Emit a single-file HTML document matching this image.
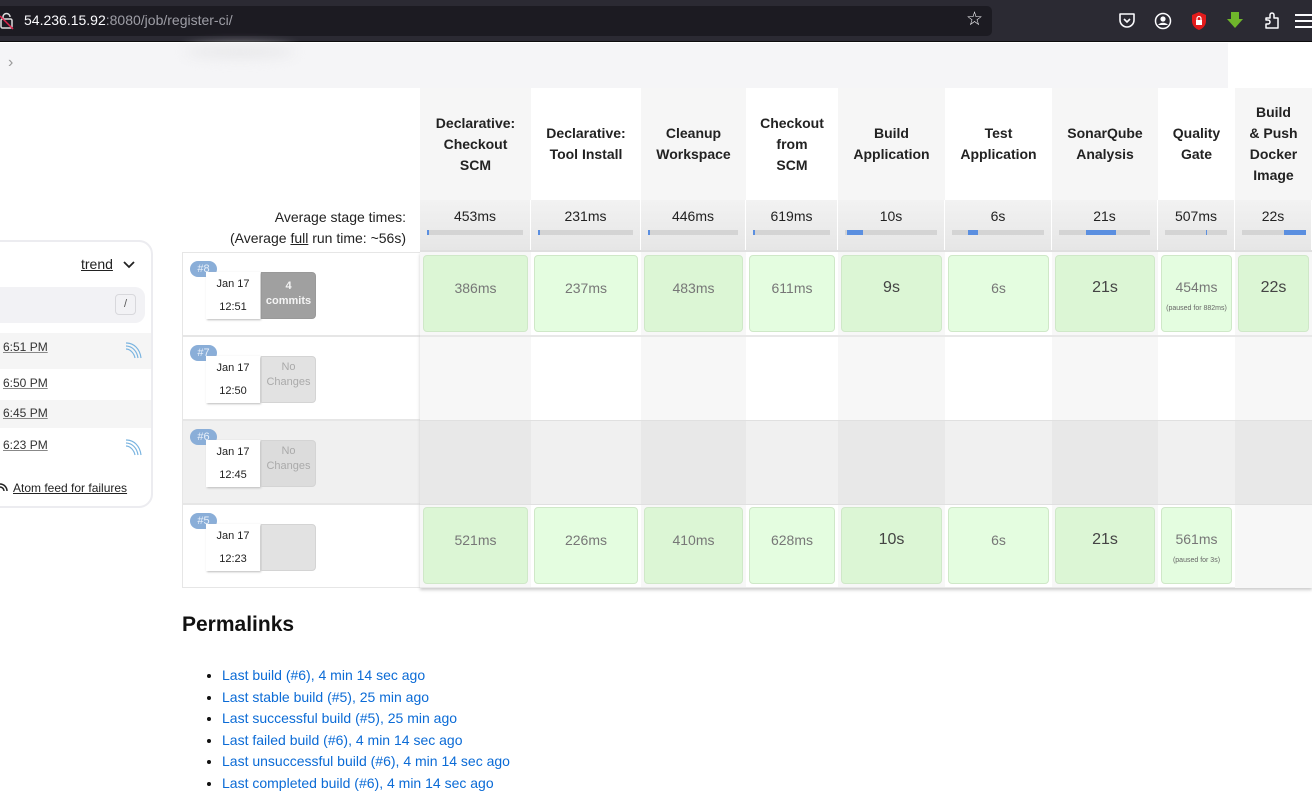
<!DOCTYPE html>
<html><head><meta charset="utf-8">
<style>
*{box-sizing:border-box;margin:0;padding:0}
body{width:1312px;height:805px;overflow:hidden;background:#fff;font-family:"Liberation Sans","DejaVu Sans",sans-serif;position:relative;color:#222}
.a{position:absolute}
.hd{position:absolute;top:88px;height:112px;display:flex;align-items:center;justify-content:center;text-align:center;font-weight:bold;font-size:14px;line-height:21px;color:#222}
.av{position:absolute;top:200px;height:50px;text-align:center;font-size:14px;padding-top:8px;background:linear-gradient(#f2f2f2,#e6e6e6);border-right:1px solid #fff}
.bar{position:absolute;top:30px;height:5px;left:7px;right:7px;background:#d4d4d4}
.bar i{position:absolute;top:0;height:5px;background:#5b8fe0}
.cl{position:absolute;height:84px;border-bottom:1px solid #e8e8e8}
.bx{position:absolute;top:3px;bottom:3px;left:3px;right:3px;border:1px solid #cfe8c8;border-radius:4px;display:flex;flex-direction:column;align-items:center;justify-content:center;font-size:14px;color:#777;padding-bottom:12px}
.g1{background:#dcf6d5}.g2{background:#e4fde0}
.dk{color:#444;font-size:16px}
.pz{font-size:7px;color:#666;margin-top:10px}
.bl{position:absolute;left:182px;width:238px;height:84px;border:1px solid #e6e6e6;border-right:none}
.num{position:absolute;left:7px;top:8px;width:27px;height:16px;border-radius:8px;background:#8aaed8;color:#e8f0fa;font-size:11px;text-align:center;line-height:16px}
.dt{position:absolute;left:23px;top:19px;width:54px;height:47px;background:#fff;box-shadow:1px 1px 2px #bbb;font-size:11px;text-align:center;line-height:23px;color:#222;padding-top:1px}
.cm{position:absolute;left:78px;top:19px;width:55px;height:47px;border-radius:0 4px 4px 0;background:#e2e2e2;border:1px solid #d4d4d4;color:#aaa;font-size:11px;text-align:center;line-height:15px;padding-top:3px}
.lk{color:#0b6bd6;font-size:14px;line-height:21.5px}
.lr{position:absolute;left:0;width:152px;font-size:12px;color:#333}
.lr span{text-decoration:underline;text-decoration-color:#888;margin-left:3px}
li::marker{color:#111}
</style></head><body>
<div class="a" style="left:0;top:0;width:1312px;height:42px;background:#2b2a33;border-bottom:1px solid #0c0c0d"></div>
<div class="a" style="left:0;top:6px;width:992px;height:30px;background:#1c1b22;border-radius:0 5px 5px 0"></div>
<svg class="a" style="left:0;top:12px" width="16" height="18"><rect x="1" y="7" width="11" height="9" rx="1.5" fill="none" stroke="#ddd" stroke-width="1.5"/><path d="M3 7V5a3.5 3.5 0 0 1 7 0" fill="none" stroke="#ddd" stroke-width="1.5"/><path d="M0 4L13 17" stroke="#e22850" stroke-width="1.5"/></svg>
<div class="a" style="left:24px;top:12px;font-size:14px;color:#fbfbfe">54.236.15.92<span style="color:#9e9ea6">:8080/job/register-ci/</span></div>
<div class="a" style="left:966px;top:8px;font-size:19px;color:#fbfbfe">☆</div>
<svg class="a" style="left:1118px;top:12px" width="18" height="17"><path d="M2 2h14v6a7 7 0 0 1-14 0z" fill="none" stroke="#fbfbfe" stroke-width="1.6" stroke-linejoin="round"/><path d="M6 7l3 3 3-3" fill="none" stroke="#fbfbfe" stroke-width="1.6"/></svg>
<svg class="a" style="left:1154px;top:12px" width="18" height="18"><circle cx="9" cy="9" r="7.5" fill="none" stroke="#fbfbfe" stroke-width="1.5"/><circle cx="9" cy="7" r="2.6" fill="#fbfbfe"/><path d="M4 13c2-3 8-3 10 0" fill="#fbfbfe"/></svg>
<svg class="a" style="left:1190px;top:11px" width="18" height="20"><path d="M9 1l7 3v6c0 5-4 8-7 9-3-1-7-4-7-9V4z" fill="#e21b1b"/><rect x="6" y="9" width="6" height="5" fill="#fff"/><path d="M7 9V7.5a2 2 0 0 1 4 0V9" fill="none" stroke="#fff" stroke-width="1.2"/></svg>
<svg class="a" style="left:1226px;top:11px" width="18" height="18"><path d="M5 1h8v7h4l-8 9-8-9h4z" fill="#6fb52b"/></svg>
<svg class="a" style="left:1263px;top:11px" width="18" height="20"><path d="M3 7h4V4a2 2 0 0 1 4 0v3h4v10H3v-4h2a2 2 0 0 0 0-4H3z" fill="none" stroke="#fbfbfe" stroke-width="1.5" stroke-linejoin="round"/></svg>
<div class="a" style="left:1295px;top:14px;width:17px;height:2px;background:#fbfbfe;box-shadow:0 6px 0 #fbfbfe,0 12px 0 #fbfbfe"></div>
<div class="a" style="left:0;top:43px;width:1228px;height:45px;background:#f5f5f7"></div>
<div class="a" style="left:8px;top:54px;font-size:16px;color:#999">›</div>
<div class="a" style="left:185px;top:46px;width:110px;height:12px;border-radius:50%;background:#e8e8ea;filter:blur(6px)"></div>

<div class="a" style="left:-20px;top:240px;width:173px;height:268px;border:2px solid #ececf0;border-radius:14px;background:#fff;overflow:hidden">
 <div class="a" style="left:99px;top:14px;font-size:14px;color:#222;text-decoration:underline">trend</div>
 <svg class="a" style="left:141px;top:19px" width="12" height="8"><path d="M1 1l5 5 5-5" fill="none" stroke="#222" stroke-width="1.8"/></svg>
 <div class="a" style="left:0;top:45px;width:163px;height:36px;background:#f2f2f5;border-radius:10px"></div>
 <div class="a" style="left:133px;top:52px;width:21px;height:21px;border:1px solid #d8d8dc;border-radius:4px;font-size:11px;color:#555;text-align:center;line-height:19px">/</div>
 <div class="a" style="left:0;top:91px;width:171px;height:1px;background:#eee"></div>
</div>
<div class="a" style="left:0;top:333px;width:151px;height:36px;background:#f5f5f5"></div>
<div class="a" style="left:0;top:400px;width:151px;height:28px;background:#f5f5f5"></div>
<div class="lr" style="top:340px"><span>6:51 PM</span></div>
<div class="lr" style="top:376px"><span>6:50 PM</span></div>
<div class="lr" style="top:406px"><span>6:45 PM</span></div>
<div class="lr" style="top:438px"><span>6:23 PM</span></div>
<svg class="a" style="left:124px;top:341px" width="20" height="18"><path d="M2 2c8 0 14 6 15 15M2 5c6 0 11 5 12 12M2 8c4 0 8 4 9 9" fill="none" stroke="#7ab4e0" stroke-width="1.2"/></svg>
<svg class="a" style="left:124px;top:438px" width="20" height="18"><path d="M2 2c8 0 14 6 15 15M2 5c6 0 11 5 12 12M2 8c4 0 8 4 9 9" fill="none" stroke="#7ab4e0" stroke-width="1.2"/></svg>
<svg class="a" style="left:0;top:481px" width="10" height="12"><path d="M0 3a7 7 0 0 1 7 7M0 6a4 4 0 0 1 4 4" fill="none" stroke="#222" stroke-width="1.5"/></svg>
<div class="a" style="left:13px;top:481px;font-size:12px;color:#222;text-decoration:underline">Atom feed for failures</div>

<div class="a" style="left:182px;top:88px;width:238px;height:112px;background:#fff"></div>
<div class="a" style="left:182px;top:207px;width:224px;text-align:right;font-size:14px;line-height:21px;color:#222">Average stage times:<br>(Average <u>full</u> run time: ~56s)</div>

<div class="hd" style="left:420px;width:111px;background:#f6f6f6">Declarative:<br>Checkout<br>SCM</div>
<div class="hd" style="left:531px;width:110px">Declarative:<br>Tool Install</div>
<div class="hd" style="left:641px;width:105px;background:#f6f6f6">Cleanup<br>Workspace</div>
<div class="hd" style="left:746px;width:92px">Checkout<br>from<br>SCM</div>
<div class="hd" style="left:838px;width:107px;background:#f6f6f6">Build<br>Application</div>
<div class="hd" style="left:945px;width:107px">Test<br>Application</div>
<div class="hd" style="left:1052px;width:106px;background:#f6f6f6">SonarQube<br>Analysis</div>
<div class="hd" style="left:1158px;width:77px">Quality<br>Gate</div>
<div class="hd" style="left:1235px;width:77px;background:#f6f6f6">Build<br>&amp; Push<br>Docker<br>Image</div>

<div class="av" style="left:420px;width:111px">453ms<div class="bar"><i style="left:0;width:2px"></i></div></div>
<div class="av" style="left:531px;width:110px">231ms<div class="bar"><i style="left:0;width:2px"></i></div></div>
<div class="av" style="left:641px;width:105px">446ms<div class="bar"><i style="left:0;width:2px"></i></div></div>
<div class="av" style="left:746px;width:92px">619ms<div class="bar"><i style="left:0;width:2px"></i></div></div>
<div class="av" style="left:838px;width:107px">10s<div class="bar"><i style="left:2px;width:16px"></i></div></div>
<div class="av" style="left:945px;width:107px">6s<div class="bar"><i style="left:16px;width:10px"></i></div></div>
<div class="av" style="left:1052px;width:106px">21s<div class="bar"><i style="left:27px;width:30px"></i></div></div>
<div class="av" style="left:1158px;width:77px">507ms<div class="bar"><i style="left:41px;width:1px"></i></div></div>
<div class="av" style="left:1235px;width:77px">22s<div class="bar"><i style="left:42px;width:22px"></i></div></div>
<div class="a" style="left:420px;top:250px;width:892px;height:2px;background:#e0e0e0"></div>

<div class="bl" style="top:252px"><div class="num">#8</div><div class="dt">Jan 17<br>12:51</div><div class="cm" style="background:#a0a0a0;border-color:#999;color:#f4f4f4;font-weight:bold;padding-top:6px">4<br>commits</div></div>
<div class="bl" style="top:336px"><div class="num">#7</div><div class="dt">Jan 17<br>12:50</div><div class="cm">No<br>Changes</div></div>
<div class="bl" style="top:420px;background:#f0f0f0"><div class="num">#6</div><div class="dt">Jan 17<br>12:45</div><div class="cm" style="background:#dcdcdc">No<br>Changes</div></div>
<div class="bl" style="top:504px"><div class="num">#5</div><div class="dt">Jan 17<br>12:23</div><div class="cm"></div></div>

<div class="a" style="left:420px;top:252px;width:892px;height:336px;background:#fff;box-shadow:0 2px 3px #ccc"></div>
<div class="a" style="left:420px;top:252px;width:111px;height:336px;background:#f7f7f7"></div>
<div class="a" style="left:641px;top:252px;width:105px;height:336px;background:#f7f7f7"></div>
<div class="a" style="left:838px;top:252px;width:107px;height:336px;background:#f7f7f7"></div>
<div class="a" style="left:1052px;top:252px;width:106px;height:336px;background:#f7f7f7"></div>
<div class="a" style="left:1235px;top:252px;width:77px;height:336px;background:#f7f7f7"></div>
<div class="a" style="left:420px;top:420px;width:892px;height:84px;background:#f0f0f0"></div>
<div class="a" style="left:420px;top:420px;width:111px;height:84px;background:#e8e8e8"></div>
<div class="a" style="left:641px;top:420px;width:105px;height:84px;background:#e8e8e8"></div>
<div class="a" style="left:838px;top:420px;width:107px;height:84px;background:#e8e8e8"></div>
<div class="a" style="left:1052px;top:420px;width:106px;height:84px;background:#e8e8e8"></div>
<div class="a" style="left:1235px;top:420px;width:77px;height:84px;background:#e8e8e8"></div>
<div class="a" style="left:420px;top:336px;width:892px;height:1px;background:#e8e8e8"></div>
<div class="a" style="left:420px;top:420px;width:892px;height:1px;background:#e0e0e0"></div>
<div class="a" style="left:420px;top:504px;width:892px;height:1px;background:#e0e0e0"></div>

<div class="cl" style="left:420px;top:252px;width:111px"><div class="bx g1">386ms</div></div>
<div class="cl" style="left:531px;top:252px;width:110px"><div class="bx g2">237ms</div></div>
<div class="cl" style="left:641px;top:252px;width:105px"><div class="bx g1">483ms</div></div>
<div class="cl" style="left:746px;top:252px;width:92px"><div class="bx g2">611ms</div></div>
<div class="cl" style="left:838px;top:252px;width:107px"><div class="bx g1 dk">9s</div></div>
<div class="cl" style="left:945px;top:252px;width:107px"><div class="bx g2">6s</div></div>
<div class="cl" style="left:1052px;top:252px;width:106px"><div class="bx g1 dk">21s</div></div>
<div class="cl" style="left:1158px;top:252px;width:77px"><div class="bx g2" style="padding-bottom:0"><span style="margin-top:4px">454ms</span><span class="pz">(paused for 882ms)</span></div></div>
<div class="cl" style="left:1235px;top:252px;width:77px"><div class="bx g1 dk">22s</div></div>
<div class="cl" style="left:420px;top:504px;width:111px"><div class="bx g1">521ms</div></div>
<div class="cl" style="left:531px;top:504px;width:110px"><div class="bx g2">226ms</div></div>
<div class="cl" style="left:641px;top:504px;width:105px"><div class="bx g1">410ms</div></div>
<div class="cl" style="left:746px;top:504px;width:92px"><div class="bx g2">628ms</div></div>
<div class="cl" style="left:838px;top:504px;width:107px"><div class="bx g1 dk">10s</div></div>
<div class="cl" style="left:945px;top:504px;width:107px"><div class="bx g2">6s</div></div>
<div class="cl" style="left:1052px;top:504px;width:106px"><div class="bx g1 dk">21s</div></div>
<div class="cl" style="left:1158px;top:504px;width:77px"><div class="bx g2" style="padding-bottom:0"><span style="margin-top:4px">561ms</span><span class="pz">(paused for 3s)</span></div></div>

<div class="a" style="left:182px;top:613px;font-size:21px;font-weight:bold;color:#111">Permalinks</div>
<ul class="a" style="left:222px;top:665px;list-style:disc;font-size:13px">
<li class="lk">Last build (#6), 4 min 14 sec ago</li>
<li class="lk">Last stable build (#5), 25 min ago</li>
<li class="lk">Last successful build (#5), 25 min ago</li>
<li class="lk">Last failed build (#6), 4 min 14 sec ago</li>
<li class="lk">Last unsuccessful build (#6), 4 min 14 sec ago</li>
<li class="lk">Last completed build (#6), 4 min 14 sec ago</li>
</ul>
</body></html>
